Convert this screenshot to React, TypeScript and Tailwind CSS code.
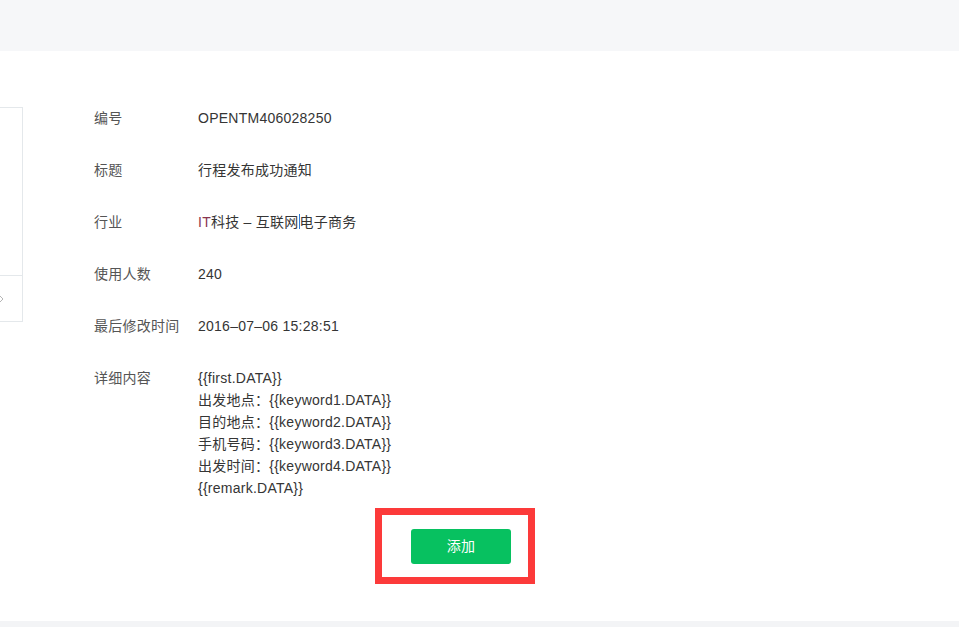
import React from "react";

const rows: { label: string; value: React.ReactNode }[] = [
  { label: "编号", value: "OPENTM406028250" },
  { label: "标题", value: "行程发布成功通知" },
  {
    label: "行业",
    value: (
      <span>
        <span className="text-[#8a3550]">IT</span>科技 – 互联网
        <span className="inline-block w-px h-[15px] bg-[#2f7bd6] align-[-2px]" />
        电子商务
      </span>
    ),
  },
  { label: "使用人数", value: "240" },
  { label: "最后修改时间", value: "2016–07–06 15:28:51" },
];

const details = [
  "{{first.DATA}}",
  "出发地点：{{keyword1.DATA}}",
  "目的地点：{{keyword2.DATA}}",
  "手机号码：{{keyword3.DATA}}",
  "出发时间：{{keyword4.DATA}}",
  "{{remark.DATA}}",
];

export default function App() {
  return (
    <div
      className="w-[959px] h-[627px] overflow-hidden bg-[#f4f5f7] text-[14px] tracking-[0.25px]"
      style={{ fontFamily: '"Liberation Sans", "Noto Sans CJK SC", sans-serif' }}
    >
      <div className="h-[51px] bg-[#f6f7f9]" />
      <div className="h-[570px] bg-white flex">
        <div className="w-[23px] mt-[56px] h-[215px] border-r border-t border-b border-[#e4e8eb] flex flex-col">
          <div className="h-[168px] border-b border-[#e4e8eb]" />
          <div className="flex-1 flex items-center">
            <svg width="4" height="8" viewBox="0 0 4 8">
              <path d="M0 1 L3 4 L0 7" fill="none" stroke="#b5b5b5" strokeWidth="1" />
            </svg>
          </div>
        </div>
        <div className="ml-[71px] pt-[56px] flex flex-col">
          {rows.map((r) => (
            <div key={r.label} className="flex h-[52px] leading-[22px]">
              <div className="w-[104px] text-[#555555]">{r.label}</div>
              <div className="text-[#353535]">{r.value}</div>
            </div>
          ))}
          <div className="flex leading-[22px]">
            <div className="w-[104px] text-[#555555]">详细内容</div>
            <div className="text-[#353535] flex flex-col">
              {details.map((d) => (
                <div key={d}>{d}</div>
              ))}
            </div>
          </div>
          <div className="mt-[9px] ml-[281px] w-[160px] h-[76px] border-[7px] border-[#fc3a3a] pl-[29px] pt-[14px]">
            <button className="w-[100px] h-[35px] rounded-[3px] bg-[#07c160] text-white text-[14px] flex items-center justify-center">
              添加
            </button>
          </div>
        </div>
      </div>
      <div className="h-[6px] bg-[#f3f4f6]" />
    </div>
  );
}
